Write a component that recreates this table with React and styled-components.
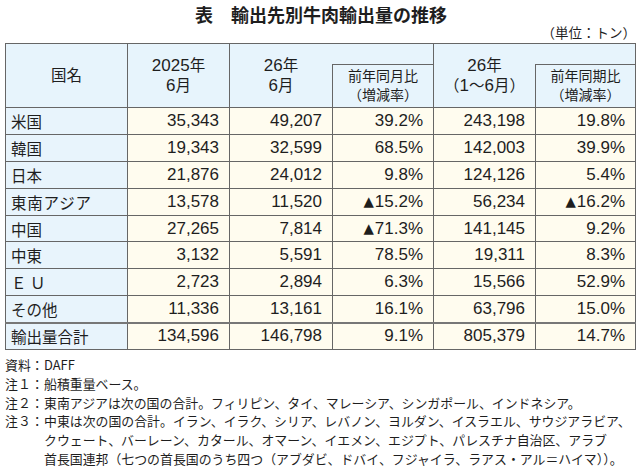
import React from "react";
import styled, { createGlobalStyle } from "styled-components";

const GlobalStyle = createGlobalStyle`
  html, body {
    margin: 0;
    padding: 0;
    background: #fff;
  }
  body {
    font-family: "Liberation Sans", "Noto Sans CJK JP", sans-serif;
    color: #1e1e1e;
  }
`;

const Page = styled.div`
  width: 640px;
  padding: 4px 5px 0;
  box-sizing: border-box;
`;

const Title = styled.h1`
  margin: 0;
  font-size: 18px;
  line-height: 20px;
  font-weight: bold;
  text-align: center;
  font-family: "Noto Sans CJK JP", sans-serif;
  padding-left: 2px;
`;

const Unit = styled.div`
  font-size: 13.5px;
  line-height: 17px;
  text-align: right;
  font-family: "Noto Sans CJK JP", sans-serif;
  margin-right: -1px;
`;

const Table = styled.table`
  margin-top: 2px;
  width: 630px;
  border-collapse: collapse;
  table-layout: fixed;
  border: 1px solid #5e5e5e;
`;

const Head = styled.th`
  background: #e7f4fc;
  border: 1px solid #666;
  font-weight: normal;
  font-size: ${(p) => (p.$sub ? "14px" : "15.5px")};
  line-height: ${(p) => (p.$sub ? "19px" : "20px")};
  text-align: center;
  vertical-align: middle;
  padding: 0;
  font-family: "Liberation Sans", "Noto Sans CJK JP", sans-serif;
  ${(p) => p.$noRight && "border-right: none;"}
  ${(p) => p.$noLeft && "border-left: none;"}
`;

const Digits = styled.span`
  font-size: 17px;
`;

const Row = styled.tr`
  height: 26.9px;
`;

const Name = styled.td`
  background: #e8f4fc;
  border: 1px solid #666;
  ${(p) => p.$total && "border-top: 2px solid #777;"}
  padding: 0 0 0 5px;
  font-size: 15.5px;
  font-family: "Noto Sans CJK JP", sans-serif;
  letter-spacing: ${(p) => (p.$wide ? "0.8px" : "0")};
  white-space: nowrap;
`;

const Cell = styled.td`
  background: #fffcef;
  border: 1px solid #666;
  ${(p) => p.$total && "border-top: 2px solid #777;"}
  padding: 0 10px 0 0;
  text-align: right;
  font-size: 17px;
  white-space: nowrap;
`;

const Tri = styled.span`
  font-family: "DejaVu Sans", sans-serif;
  font-size: 13.5px;
  margin-right: 1px;
  position: relative;
  top: -1px;
`;

const Notes = styled.div`
  margin-top: 6px;
  font-family: "Noto Sans CJK JP", sans-serif;
  font-size: 12.9px;
  line-height: 18.8px;
`;

const Note = styled.div`
  display: flex;
  white-space: nowrap;
`;

const Label = styled.span`
  flex: 0 0 39px;
`;

const rows = [
  ["米国", "35,343", "49,207", "39.2%", "243,198", "19.8%"],
  ["韓国", "19,343", "32,599", "68.5%", "142,003", "39.9%"],
  ["日本", "21,876", "24,012", "9.8%", "124,126", "5.4%"],
  ["東南アジア", "13,578", "11,520", "▲15.2%", "56,234", "▲16.2%"],
  ["中国", "27,265", "7,814", "▲71.3%", "141,145", "9.2%"],
  ["中東", "3,132", "5,591", "78.5%", "19,311", "8.3%"],
  ["Ｅ Ｕ", "2,723", "2,894", "6.3%", "15,566", "52.9%"],
  ["その他", "11,336", "13,161", "16.1%", "63,796", "15.0%"],
  ["輸出量合計", "134,596", "146,798", "9.1%", "805,379", "14.7%"],
];

function Value({ text }) {
  if (text.startsWith("▲")) {
    return (
      <>
        <Tri>▲</Tri>
        {text.slice(1)}
      </>
    );
  }
  return text;
}

export default function App() {
  return (
    <Page>
      <GlobalStyle />
      <Title>表　輸出先別牛肉輸出量の推移</Title>
      <Unit>（単位：トン）</Unit>
      <Table>
        <colgroup>
          <col style={{ width: 122 }} />
          <col style={{ width: 102 }} />
          <col style={{ width: 103 }} />
          <col style={{ width: 101 }} />
          <col style={{ width: 102 }} />
          <col style={{ width: 100 }} />
        </colgroup>
        <thead>
          <tr style={{ height: 21 }}>
            <Head rowSpan={2}>国名</Head>
            <Head rowSpan={2}>
              <Digits>2025</Digits>年<br />
              <Digits>6</Digits>月
            </Head>
            <Head rowSpan={2} $noRight>
              <Digits>26</Digits>年<br />
              <Digits>6</Digits>月
            </Head>
            <Head $noLeft />
            <Head rowSpan={2} $noRight>
              <Digits>26</Digits>年<br />（<Digits>1</Digits>～<Digits>6</Digits>月）
            </Head>
            <Head $noLeft />
          </tr>
          <tr style={{ height: 43 }}>
            <Head $sub>
              前年同月比
              <br />
              （増減率）
            </Head>
            <Head $sub>
              前年同期比
              <br />
              （増減率）
            </Head>
          </tr>
        </thead>
        <tbody>
          {rows.map(([name, ...vals], i) => {
            const total = i === rows.length - 1;
            return (
              <Row key={name}>
                <Name $total={total} $wide={name === "東南アジア"}>
                  {name}
                </Name>
                {vals.map((v, j) => (
                  <Cell key={j} $total={total}>
                    <Value text={v} />
                  </Cell>
                ))}
              </Row>
            );
          })}
        </tbody>
      </Table>
      <Notes>
        <Note>
          <Label>資料：</Label>
          <span>DAFF</span>
        </Note>
        <Note>
          <Label>注１：</Label>
          <span>船積重量ベース。</span>
        </Note>
        <Note>
          <Label>注２：</Label>
          <span>
            東南アジアは次の国の合計。フィリピン、タイ、マレーシア、シンガポール、インドネシア。
          </span>
        </Note>
        <Note>
          <Label>注３：</Label>
          <span>
            中東は次の国の合計。イラン、イラク、シリア、レバノン、ヨルダン、イスラエル、サウジアラビア、
            <br />
            クウェート、バーレーン、カタール、オマーン、イエメン、エジプト、パレスチナ自治区、アラブ
            <br />
            首長国連邦（七つの首長国のうち四つ（アブダビ、ドバイ、フジャイラ、ラアス・アル＝ハイマ））。
          </span>
        </Note>
      </Notes>
    </Page>
  );
}
